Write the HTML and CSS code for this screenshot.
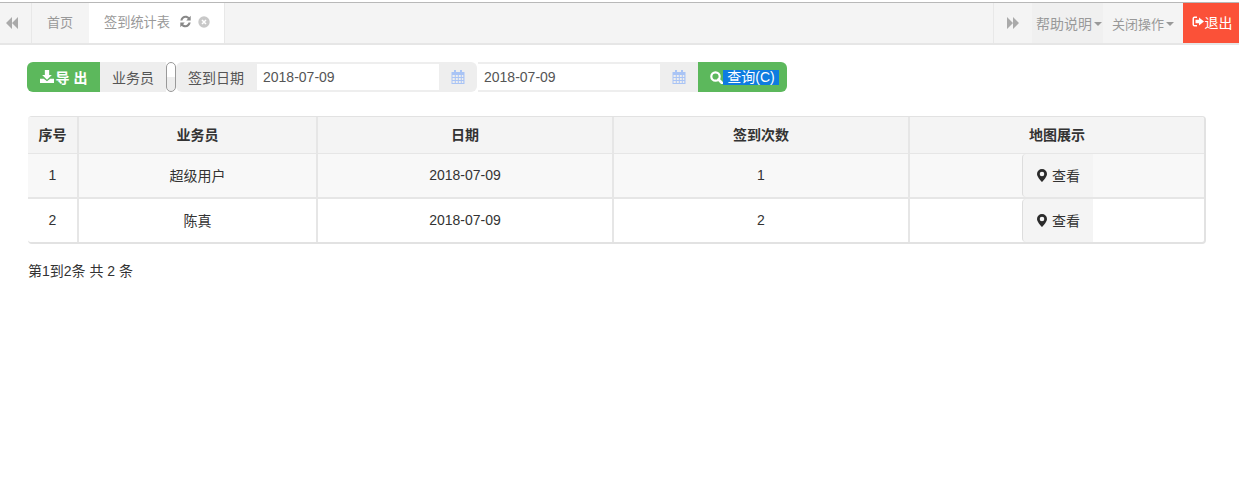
FILE: index.html
```
<!DOCTYPE html>
<html lang="zh">
<head>
<meta charset="utf-8">
<title>签到统计表</title>
<link rel="stylesheet" href="styles.css">
</head>
<body>
<header class="tabbar">
  <button class="nav-arrow"><svg width="14" height="12" viewBox="0 0 14 12"><path d="M7 0v12L1 6zM13 0v12L7 6z"/></svg></button>
  <div class="tab home">首页</div>
  <div class="tab active">签到统计表
    <svg class="refresh" width="13" height="13" viewBox="0 0 12 12"><path d="M1.200 5C1.700 2.400 3.700.6 6 .6c1.400 0 2.700.6 3.500 1.500L10.800.8V5H6.700l1.500-1.500C7.600 2.900 6.800 2.600 6 2.600 4.700 2.600 3.600 3.600 3.200 5zM10.800 7C10.300 9.600 8.300 11.400 6 11.400c-1.400 0-2.700-.6-3.500-1.500L1.200 11.200V7h4.100L3.800 8.500C4.400 9.100 5.200 9.400 6 9.400c1.300 0 2.400-1 2.800-2.400z"/></svg>
    <svg class="close" width="12" height="12" viewBox="0 0 12 12"><circle cx="6" cy="6" r="5.700"/><path d="M4 4l4 4M8 4l-4 4"/></svg>
  </div>
  <div class="spacer"></div>
  <button class="nav-arrow right"><svg width="14" height="12" viewBox="0 0 14 12"><path d="M1 0v12l6-6zM7 0v12l6-6z"/></svg></button>
  <div class="menu help">帮助说明<i class="caret"></i></div>
  <div class="menu close-ops">关闭操作<i class="caret"></i></div>
  <div class="logout"><svg width="12" height="11" viewBox="0 0 12 11"><path d="M5 .5H2.500A2 2 0 0 0 .5 2.500v6a2 2 0 0 0 2 2H5V9H2.500a.5.5 0 0 1-.5-.5v-6a.5.5 0 0 1 .5-.5H5z"/><path d="M7 1.500l5 4-5 4V7.300H3.500V3.700H7z"/></svg>退出</div>
</header>

<main class="content">
  <form class="toolbar">
    <button type="button" class="btn-green export"><svg width="14" height="13" viewBox="0 0 13 12"><path d="M4.500 0h4v4.500h2.500L6.500 9 2 4.500h2.500z"/><path d="M0 8h3.500l3 2.500 3-2.500H13v4H0z"/></svg>导 出</button>
    <span class="addon person">业务员</span>
    <span class="select-stub"></span>
    <span class="addon date-label">签到日期</span>
    <input class="date-input" value="2018-07-09">
    <span class="addon cal"><svg width="14" height="14" viewBox="0 0 14 14"><path d="M3 0h2v2h4V0h2v2h2.500v12H.5V2H3zM1.500 5v2h2.300V5zm3.300 0v2h2V5zm3 0v2h2V5zm3 0v2h1.500V5zM1.500 8v2h2.300V8zm3.300 0v2h2V8zm3 0v2h2V8zm3 0v2h1.500V8zM1.500 11v2h2.300v-2zm3.300 0v2h2v-2zm3 0v2h2v-2zm3 0v2h1.500v-2z"/></svg></span>
    <input class="date-input second" value="2018-07-09">
    <span class="addon cal"><svg width="14" height="14" viewBox="0 0 14 14"><path d="M3 0h2v2h4V0h2v2h2.500v12H.5V2H3zM1.500 5v2h2.300V5zm3.300 0v2h2V5zm3 0v2h2V5zm3 0v2h1.500V5zM1.500 8v2h2.300V8zm3.300 0v2h2V8zm3 0v2h2V8zm3 0v2h1.500V8zM1.500 11v2h2.300v-2zm3.300 0v2h2v-2zm3 0v2h2v-2zm3 0v2h1.500v-2z"/></svg></span>
    <button type="button" class="btn-green search"><svg width="13" height="13" viewBox="0 0 13 13"><circle cx="5.500" cy="5.500" r="4.200" fill="none" stroke="#fff" stroke-width="2.200"/><path d="M8.500 8.500L12 12" stroke="#fff" stroke-width="2.600" stroke-linecap="round"/></svg><span class="selected">查询(C)</span></button>
  </form>

  <div class="table-wrap">
    <table class="data">
      <colgroup><col class="c1"><col class="c2"><col class="c3"><col class="c4"><col class="c5"></colgroup>
      <thead><tr><th>序号</th><th>业务员</th><th>日期</th><th>签到次数</th><th>地图展示</th></tr></thead>
      <tbody>
        <tr class="odd"><td>1</td><td>超级用户</td><td>2018-07-09</td><td>1</td><td class="map"><button class="view"><svg width="10" height="13" viewBox="0 0 10 13"><path fill-rule="evenodd" d="M5 0a5 5 0 0 1 5 5c0 2.500-3 6-5 8-2-2-5-5.500-5-8a5 5 0 0 1 5-5zm0 2.700a2.300 2.300 0 1 0 0 4.600 2.300 2.300 0 0 0 0-4.600z"/></svg>查看</button></td></tr>
        <tr><td>2</td><td>陈真</td><td>2018-07-09</td><td>2</td><td class="map"><button class="view"><svg width="10" height="13" viewBox="0 0 10 13"><path fill-rule="evenodd" d="M5 0a5 5 0 0 1 5 5c0 2.500-3 6-5 8-2-2-5-5.500-5-8a5 5 0 0 1 5-5zm0 2.700a2.300 2.300 0 1 0 0 4.600 2.300 2.300 0 0 0 0-4.600z"/></svg>查看</button></td></tr>
      </tbody>
    </table>
  </div>
  <p class="pager">第1到2条 共 2 条</p>
</main>
</body>
</html>
```
FILE: styles.css
```
* { box-sizing: border-box; }
html, body { margin: 0; padding: 0; }
body {
  background: #fff;
  color: #333;
  font-family: "Liberation Sans", "Noto Sans CJK SC", sans-serif;
  font-size: 14px;
  overflow: hidden;
}
button, input { font-family: inherit; }

.tabbar {
  display: flex;
  align-items: stretch;
  height: 43px;
  margin-top: 2px;
  background: #f4f4f4;
  border-top: 1px solid #b8b8b8;
  border-bottom: 2px solid #e6e6e6;
  color: #999;
}
.nav-arrow {
  width: 32px;
  padding: 0 7px 0 0;
  border: 0;
  border-right: 1px solid #e8e8e8;
  background: #f4f4f4;
  display: flex;
  align-items: center;
  justify-content: center;
}
.nav-arrow svg { fill: #aaa; }
.nav-arrow.right { width: 39px; padding: 0; border-right: 0; border-left: 1px solid #e8e8e8; }
.tab { display: flex; align-items: center; padding: 0 15px 3px; font-size: 13px; }
.tab.home { padding-right: 16px; }
.tab.active {
  width: 136px;
  background: #fff;
  border-right: 1px solid #e8e8e8;
  padding-right: 0;
  padding-left: 15px;
  font-size: 13.2px;
}
.refresh { fill: #888; margin-left: 9px; flex: none; }
.close { margin-left: 6px; flex: none; }
.close circle { fill: #c8c8c8; }
.close path { stroke: #fff; stroke-width: 1.500; fill: none; }
.spacer { flex: 1; }
.menu { display: flex; align-items: center; width: 71px; padding-left: 4px; white-space: nowrap; }
.menu.help { background: #f0f0f0; }
.menu.close-ops { width: 80px; padding-left: 9px; font-size: 13px; }
.caret {
  margin-left: 2px;
  margin-top: 2px;
  border-top: 4px solid #999;
  border-left: 4px solid transparent;
  border-right: 4px solid transparent;
}
.logout {
  width: 56px;
  background: #fb5138;
  color: #fff;
  display: flex;
  align-items: center;
  justify-content: center;
  padding: 0 0 3px 2px;
}
.logout svg { fill: #fff; margin-right: 1px; }

.content { padding: 17px 33px 0 28px; }
.toolbar { display: flex; align-items: stretch; height: 30px; margin-left: -1px; width: 760px; }
.btn-green {
  background: #5cb85c;
  border: 0;
  color: #fff;
  font-size: 14px;
  padding: 0;
  display: flex;
  align-items: center;
  justify-content: center;
}
.export { width: 73px; border-radius: 6px 0 0 6px; font-weight: bold; padding-bottom: 1px; }
.export svg { fill: #fff; margin-right: 2px; }
.addon {
  background: #eee;
  color: #555;
  display: flex;
  align-items: center;
  justify-content: center;
  padding-bottom: 1px;
}
.person { width: 66px; }
.select-stub {
  width: 10px;
  border: 1px solid #999;
  border-radius: 5px;
  background: linear-gradient(#fff 50%, #ededed 50%);
}
.date-label { width: 81px; border-radius: 6px 0 0 6px; padding-left: 1px; padding-right: 2px; }
.date-input {
  width: 182px;
  border: 1px solid #eee;
  border-width: 2px 0;
  padding: 0 6px;
  font-size: 14px;
  color: #555;
  outline: 0;
  background: #fff;
}
.date-input.second { margin-left: 1px; }
.cal { width: 38px; padding-bottom: 0; }
.cal svg { fill: #a9c4f5; }
.cal:nth-of-type(4) { border-radius: 0 6px 6px 0; }
.search { width: 89px; border-radius: 0 6px 6px 0; font-weight: normal; padding-left: 4px; }
.search svg { margin-right: 0; }
.selected { background: #0f7ce0; padding: 0 4px; line-height: 15px; }

.table-wrap {
  margin-top: 24px;
  width: 1178px;
  border: 1px solid #e2e2e2;
  border-width: 1px 2px 2px 0;
  border-radius: 4px;
  overflow: hidden;
}
.data { border-collapse: collapse; table-layout: fixed; width: 100%; }
.c1 { width: 50px; } .c2 { width: 239px; } .c3 { width: 296px; } .c4 { width: 296px; } .c5 { width: 295px; }
.data th, .data td { text-align: center; padding: 0; border-right: 2px solid #e6e6e6; color: #333; }
.data th:last-child, .data td:last-child { border-right: 0; }
.data th { height: 36px; padding-bottom: 1px; background: #f4f4f4; font-size: 14px; border-bottom: 1px solid #e6e6e6; }
.data td { height: 43px; padding-bottom: 1px; border-bottom: 2px solid #e6e6e6; }
.data td.map { padding-bottom: 0; }
.data tbody tr:last-child td { border-bottom: 0; }
.odd td { background: #f8f8f8; }
.view {
  width: 71px;
  height: 43px;
  border: 0;
  border-left: 1px solid #ddd;
  border-top-left-radius: 4px;
  border-bottom-left-radius: 4px;
  background: #f4f4f4;
  color: #333;
  font-size: 14px;
  padding: 0 0 0 2px;
  display: inline-flex;
  align-items: center;
  justify-content: center;
  vertical-align: top;
}
.view svg { fill: #2b2b2b; margin-right: 5px; }
.pager { margin: 18px 0 0; font-size: 14px; line-height: 18px; color: #333; }
```
